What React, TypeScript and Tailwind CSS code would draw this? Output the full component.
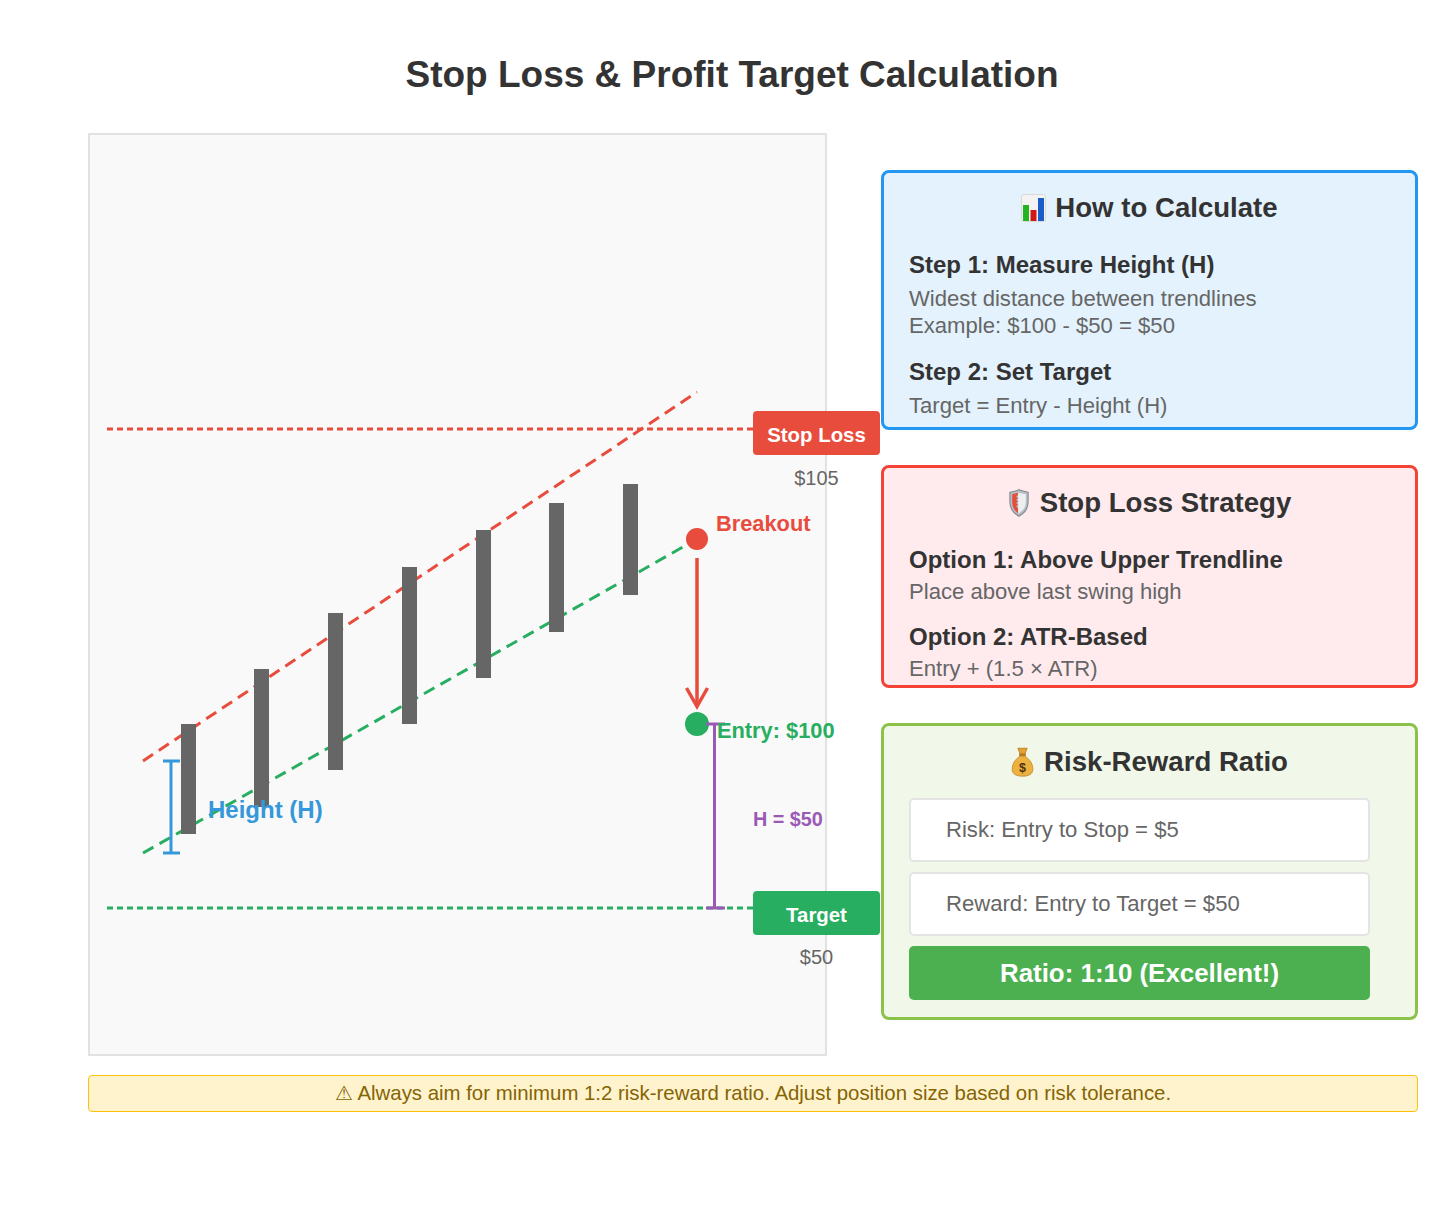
import React from "react";

const ChartIcon = () => (
  <svg width="25" height="28" viewBox="0 0 25 28" className="shrink-0">
    <rect x="0.5" y="0.5" width="24" height="27" rx="2" fill="#f3f3f3" stroke="#d9d9d9" />
    <rect x="2" y="11" width="6" height="16" fill="#22b422" />
    <rect x="9.5" y="16" width="6" height="11" fill="#d01818" />
    <rect x="17" y="4" width="6" height="23" fill="#1a5cc8" />
  </svg>
);

const ShieldIcon = () => (
  <svg width="22" height="28" viewBox="0 0 20 27" className="shrink-0">
    <path d="M10 0.8 C6 2.2 3.5 2.8 1.2 3.2 L1.2 12.5 C1.2 19 5 23.5 10 26.2 C15 23.5 18.8 19 18.8 12.5 L18.8 3.2 C16.5 2.8 14 2.2 10 0.8 Z" fill="#b9bec4" stroke="#80868d" strokeWidth="1" />
    <path d="M9.2 3.7 C11.5 4.3 14 4.8 16.6 5.1 L16.6 12.4 C16.6 17.6 14 21.2 9.2 23.6 Z" fill="#eceef0" />
    <path d="M3.4 5 C5.4 4.6 7 4.2 9 3.6 L9 5.6 L7.2 7.2 L9 8.8 L7.2 10.4 L9 12 L7.2 13.6 L9 15.2 L7.2 16.8 L9 18.4 L9 23.3 C6 21.3 3.4 17.8 3.4 12.4 Z" fill="#e2503a" />
  </svg>
);

const BagIcon = () => (
  <svg width="23" height="30" viewBox="0 0 22 29" className="shrink-0">
    <path d="M6.5 1.2 L15.5 1.2 L13.3 6.8 L8.7 6.8 Z" fill="#e4a234" stroke="#b57a1c" strokeWidth="0.8" />
    <rect x="7.6" y="6.4" width="6.8" height="2.6" rx="1.2" fill="#b87a1d" />
    <path d="M8.6 9 C3.5 12 1 17 1 21.2 C1 26 4.6 28.2 11 28.2 C17.4 28.2 21 26 21 21.2 C21 17 18.5 12 13.4 9 Z" fill="#edb13f" stroke="#c2852a" strokeWidth="0.8" />
    <text x="11" y="24.5" textAnchor="middle" fontSize="12" fontWeight="bold" fill="#4a3210">$</text>
  </svg>
);

function Chart() {
  const bars = [
    { x: 181, y: 724, h: 110 },
    { x: 254, y: 669, h: 138 },
    { x: 328, y: 613, h: 157 },
    { x: 402, y: 567, h: 157 },
    { x: 476, y: 530, h: 148 },
    { x: 549, y: 503, h: 129 },
    { x: 623, y: 484, h: 111 },
  ];
  return (
    <svg
      width="800"
      height="919"
      viewBox="90 135 800 919"
      className="block overflow-visible"
      style={{ overflow: "visible" }}
    >
      <line x1="107" y1="429" x2="753" y2="429" stroke="#e74c3c" strokeWidth="3" strokeDasharray="6,4" />
      <line x1="107" y1="908" x2="753" y2="908" stroke="#27ae60" strokeWidth="3" strokeDasharray="6,4" />
      <line x1="143" y1="761" x2="697" y2="392" stroke="#e74c3c" strokeWidth="3" strokeDasharray="12,7" />
      <line x1="143" y1="853" x2="697" y2="539" stroke="#27ae60" strokeWidth="3" strokeDasharray="12,7" />
      {bars.map((b, i) => (
        <rect key={i} x={b.x} y={b.y} width="15" height={b.h} fill="#666666" />
      ))}
      <line x1="171" y1="761" x2="171" y2="853" stroke="#3498db" strokeWidth="3" />
      <line x1="163" y1="761" x2="180" y2="761" stroke="#3498db" strokeWidth="3" />
      <line x1="163" y1="853" x2="180" y2="853" stroke="#3498db" strokeWidth="3" />
      <text x="208" y="817.5" fill="#3498db" fontSize="24" fontWeight="bold">Height (H)</text>
      <circle cx="697" cy="539" r="11" fill="#e74c3c" />
      <text x="716" y="530.5" fill="#e74c3c" fontSize="21.8" fontWeight="bold">Breakout</text>
      <line x1="697" y1="558" x2="697" y2="705" stroke="#e74c3c" strokeWidth="3.5" />
      <path d="M686.5 688 L697 706.5 L707.5 688" fill="none" stroke="#e74c3c" strokeWidth="3.5" />
      <circle cx="697" cy="724" r="12" fill="#27ae60" />
      <line x1="714.5" y1="724" x2="714.5" y2="908" stroke="#9b59b6" strokeWidth="3" />
      <line x1="706" y1="724" x2="725" y2="724" stroke="#9b59b6" strokeWidth="3" />
      <line x1="706" y1="908" x2="725" y2="908" stroke="#9b59b6" strokeWidth="3" />
      <text x="717" y="738" fill="#27ae60" fontSize="21.8" fontWeight="bold">Entry: $100</text>
      <text x="753" y="826" fill="#9b59b6" fontSize="19.8" fontWeight="bold">H = $50</text>
      <rect x="753" y="411" width="127" height="44" rx="4" fill="#e74c3c" />
      <text x="816.5" y="442" fill="#ffffff" fontSize="20.4" fontWeight="bold" textAnchor="middle">Stop Loss</text>
      <text x="816.5" y="485" fill="#666666" fontSize="20" textAnchor="middle">$105</text>
      <rect x="753" y="891" width="127" height="44" rx="4" fill="#27ae60" />
      <text x="816.5" y="922" fill="#ffffff" fontSize="20.4" fontWeight="bold" textAnchor="middle">Target</text>
      <text x="816.5" y="964" fill="#666666" fontSize="20" textAnchor="middle">$50</text>
    </svg>
  );
}

export default function App() {
  return (
    <div className="w-[1448px] h-[1207px] bg-white font-['Liberation_Sans',Arial,sans-serif] text-[#333]">
      <div className="pt-[53px] pl-[16px] flex justify-center">
        <h1 className="text-[37px] leading-[44px] font-bold text-[#333]">
          Stop Loss &amp; Profit Target Calculation
        </h1>
      </div>

      <div className="mt-[36px] pl-[88px] flex">
        <div className="w-[739px] h-[923px] shrink-0 border-2 border-[#e2e2e2] bg-[#f9f9f9]">
          <Chart />
        </div>

        <div className="ml-[54px] w-[537px] pt-[37px] flex flex-col">
          <div className="h-[260px] border-[3px] border-[#2196f3] rounded-[8px] bg-[#e3f2fd] px-[25px] pt-[19px]">
            <div className="flex justify-center items-center gap-[9px] leading-[32px]">
              <ChartIcon />
              <span className="text-[27.6px] font-bold text-[#333]">How to Calculate</span>
            </div>
            <div className="mt-[27px] text-[24px] leading-[28px] font-bold text-[#333]">Step 1: Measure Height (H)</div>
            <div className="mt-[6px] text-[22.1px] leading-[27px] text-[#666]">
              <div>Widest distance between trendlines</div>
              <div>Example: $100 - $50 = $50</div>
            </div>
            <div className="mt-[19px] text-[24px] leading-[28px] font-bold text-[#333]">Step 2: Set Target</div>
            <div className="mt-[6px] text-[22.1px] leading-[27px] text-[#666]">Target = Entry - Height (H)</div>
          </div>

          <div className="mt-[35px] h-[223px] border-[3px] border-[#f44336] rounded-[8px] bg-[#ffebee] px-[25px] pt-[19px]">
            <div className="flex justify-center items-center gap-[10px] leading-[32px]">
              <ShieldIcon />
              <span className="text-[27.6px] font-bold text-[#333]">Stop Loss Strategy</span>
            </div>
            <div className="mt-[27px] text-[24px] leading-[28px] font-bold text-[#333]">Option 1: Above Upper Trendline</div>
            <div className="mt-[4px] text-[22.1px] leading-[27px] text-[#666]">Place above last swing high</div>
            <div className="mt-[18px] text-[24px] leading-[28px] font-bold text-[#333]">Option 2: ATR-Based</div>
            <div className="mt-[4px] text-[22.1px] leading-[27px] text-[#666]">Entry + (1.5 × ATR)</div>
          </div>

          <div className="mt-[35px] h-[297px] border-[3px] border-[#8bc34a] rounded-[8px] bg-[#f1f8e9] px-[25px] pt-[20px]">
            <div className="flex justify-center items-center gap-[10px] leading-[32px]">
              <BagIcon />
              <span className="text-[27.6px] font-bold text-[#333]">Risk-Reward Ratio</span>
            </div>
            <div className="mt-[20px] w-[461px] flex flex-col gap-[10px]">
              <div className="h-[64px] flex items-center pl-[35px] bg-white border-2 border-[#e4e4e4] rounded-[5px] text-[22.1px] text-[#666]">
                Risk: Entry to Stop = $5
              </div>
              <div className="h-[64px] flex items-center pl-[35px] bg-white border-2 border-[#e4e4e4] rounded-[5px] text-[22.1px] text-[#666]">
                Reward: Entry to Target = $50
              </div>
              <div className="h-[54px] flex items-center justify-center bg-[#4caf50] rounded-[5px] text-[25.9px] font-bold text-white">
                Ratio: 1:10 (Excellent!)
              </div>
            </div>
          </div>
        </div>
      </div>

      <div className="mt-[19px] ml-[88px] w-[1330px] h-[37px] flex items-center justify-center border-[1.5px] border-[#ffc107] rounded-[4px] bg-[#fff3cd] text-[20.4px] text-[#856404]">
        ⚠ Always aim for minimum 1:2 risk-reward ratio. Adjust position size based on risk tolerance.
      </div>
    </div>
  );
}
